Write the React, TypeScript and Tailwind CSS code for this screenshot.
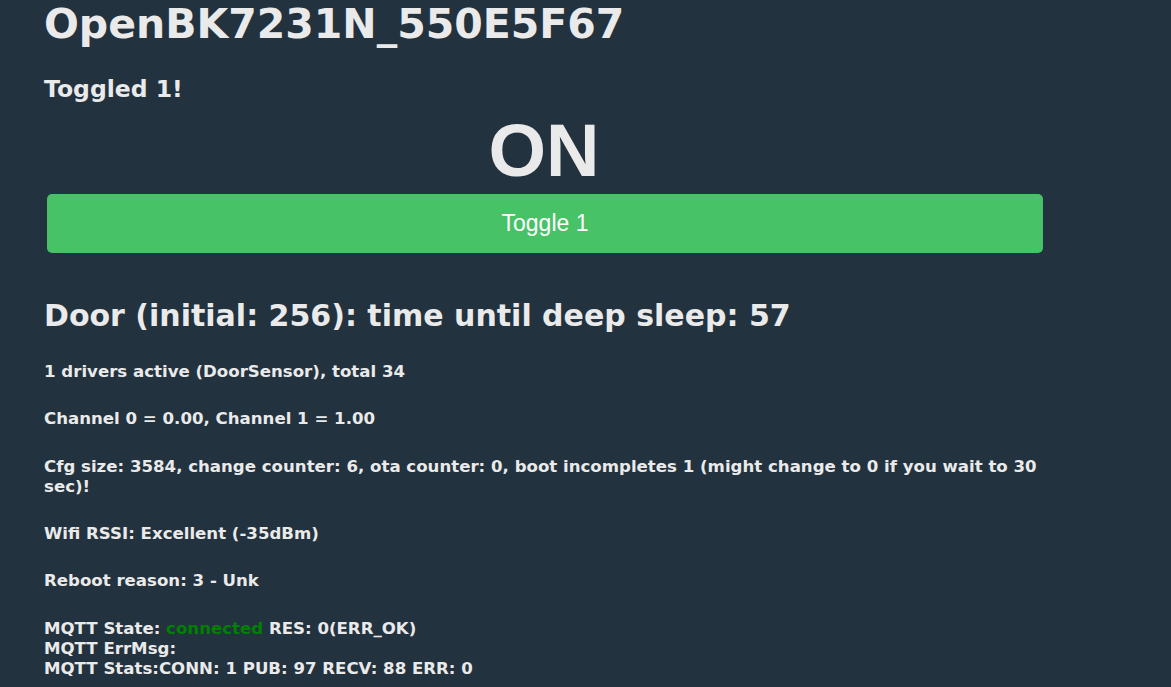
export default function App() {
  return (
    <div className="min-h-screen bg-[#22323f] font-['DejaVu_Sans',Verdana,sans-serif] font-bold text-[#eaeaea]">
      <div className="ml-[44px] w-[1040px]">
        <h1 className="text-[41px] leading-[48px]">OpenBK7231N_550E5F67</h1>
        <h3 className="mt-[27px] text-[23.5px] leading-[28px]">Toggled 1!</h3>

        <div className="mt-[8px] w-[1000px] text-center font-['Liberation_Sans',Arial,sans-serif] text-[74px] leading-[80px]">ON</div>
        <button
          type="button"
          className="mx-[3px] mt-[3px] flex h-[59px] w-[996px] items-center justify-center rounded-[5px] bg-[#47c267] font-['Liberation_Sans',Arial,sans-serif] text-[23px] font-normal text-white"
        >
          Toggle 1
        </button>

        <h2 className="mt-[45px] text-[30px] leading-[36px]">Door (initial: 256): time until deep sleep: 57</h2>

        <div className="text-[16.6px] leading-[19.5px]">
          <p className="mt-[28px]">1 drivers active (DoorSensor), total 34</p>
          <p className="mt-[27px]">Channel 0 = 0.00, Channel 1 = 1.00</p>
          <p className="mt-[29px] whitespace-nowrap">
            Cfg size: 3584, change counter: 6, ota counter: 0, boot incompletes 1 (might change to 0 if you wait to 30
            <br />
            sec)!
          </p>
          <p className="mt-[28px]">Wifi RSSI: Excellent (-35dBm)</p>
          <p className="mt-[27px]">Reboot reason: 3 - Unk</p>
          <div className="mt-[29px] leading-[20px]">
            <div>
              MQTT State: <span className="text-[#008000]">connected</span> RES: 0(ERR_OK)
            </div>
            <div>MQTT ErrMsg:</div>
            <div>MQTT Stats:CONN: 1 PUB: 97 RECV: 88 ERR: 0</div>
          </div>
        </div>
      </div>
    </div>
  );
}
